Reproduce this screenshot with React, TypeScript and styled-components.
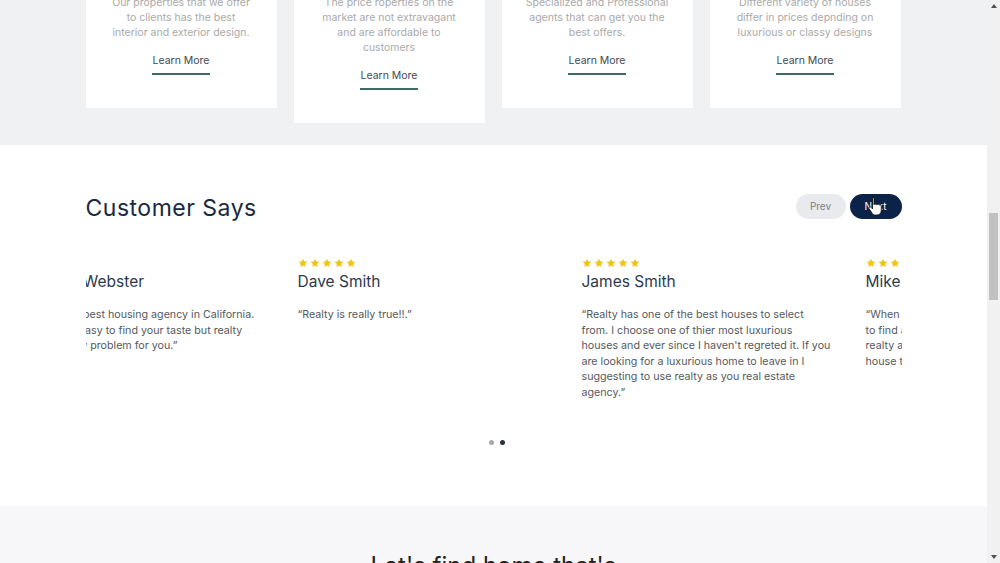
import styled, { createGlobalStyle } from "styled-components";

const GlobalStyle = createGlobalStyle`
  html, body {
    margin: 0;
    padding: 0;
    overflow: hidden;
  }
  body {
    font-family: Inter, "Open Sans", sans-serif;
    background: #ffffff;
  }
`;

const services = [
  ["Our properties that we offer", "to clients has the best", "interior and exterior design."],
  ["The price roperties on the", "market are not extravagant", "and are affordable to", "customers"],
  ["Specialized and Professional", "agents that can get you the", "best offers."],
  ["Different variety of houses", "differ in prices depnding on", "luxurious or classy designs"],
];

const reviews = [
  {
    name: "Christian Webster",
    stars: 5,
    lines: [
      "\u201CRealty is the best housing agency in California.",
      "It is not very easy to find your taste but realty",
      "resolves every problem for you.\u201D",
    ],
  },
  { name: "Dave Smith", stars: 5, lines: ["\u201CRealty is really true!!.\u201D"] },
  {
    name: "James Smith",
    stars: 5,
    lines: [
      "\u201CRealty has one of the best houses to select",
      "from. I choose one of thier most luxurious",
      "houses and ever since I haven't regreted it. If you",
      "are looking for a luxurious home to leave in I",
      "suggesting to use realty as you real estate",
      "agency.\u201D",
    ],
  },
  {
    name: "Mike Jones",
    stars: 5,
    lines: [
      "\u201CWhen I moved here I was struggling",
      "to find a home for my family until",
      "realty agents showed me a beautiful",
      "house that fit my budget.\u201D",
    ],
  },
];

const Page = styled.div`
  display: flex;
  width: 1000px;
  height: 563px;
  overflow: hidden;
`;

const Main = styled.main`
  flex: 1;
  overflow: hidden;
`;

const Services = styled.section`
  background: #f0f1f3;
  padding: 0 0 22px;
  margin-top: -5px;
`;

const Container = styled.div`
  width: 816px;
  margin: 0 auto;
`;

const CardRow = styled.div`
  display: flex;
  align-items: flex-start;
  gap: 17px;
`;

const Card = styled.div`
  width: 191px;
  background: #ffffff;
  padding: 0 8px 33px;
  box-sizing: border-box;
  display: flex;
  flex-direction: column;
  align-items: center;
`;

const CardText = styled.p`
  margin: 0;
  font-family: Inter, sans-serif;
  font-size: 10.5px;
  line-height: 15px;
  color: #a9a9a9;
  text-align: center;
`;

const LearnMore = styled.a`
  margin-top: 14px;
  font-family: Inter, sans-serif;
  font-size: 10.5px;
  color: #444a4f;
  text-decoration: none;
  padding-bottom: 5px;
  border-bottom: 2px solid #3d6a66;
  line-height: 14px;
`;

const Testimonials = styled.section`
  background: #ffffff;
  padding: 48px 0 61px;
`;

const HeadRow = styled.div`
  display: flex;
  align-items: center;
  justify-content: space-between;
  height: 26px;
`;

const Heading = styled.h2`
  margin: 3px 0 0;
  font-family: Inter, sans-serif;
  font-weight: 400;
  font-size: 23px;
  color: #1a2a40;
  letter-spacing: 0.5px;
`;

const Buttons = styled.div`
  position: relative;
  display: flex;
  gap: 4px;
`;

const NavButton = styled.button<{ $active?: boolean }>`
  width: ${(p) => (p.$active ? "52px" : "50px")};
  height: 25px;
  border: none;
  border-radius: 13px;
  font-family: Inter, sans-serif;
  font-size: 10px;
  background: ${(p) => (p.$active ? "#0c2349" : "#e9eaed")};
  color: ${(p) => (p.$active ? "#ffffff" : "#7a7f86")};
`;

const Cursor = styled.svg`
  position: absolute;
  left: 72px;
  top: 2px;
`;

const Viewport = styled.div`
  margin-top: 39px;
  overflow: hidden;
`;

const Track = styled.div<{ $shift: number }>`
  display: flex;
  transform: translateX(${(p) => -p.$shift}px);
`;

const Slide = styled.div`
  flex: 0 0 284px;
  padding-right: 24px;
  box-sizing: border-box;
`;

const Stars = styled.div`
  display: flex;
  gap: 2px;
  height: 10px;
`;

const Name = styled.h3`
  margin: 4px 0 0;
  font-family: Inter, sans-serif;
  font-weight: 400;
  font-size: 15.5px;
  line-height: 20px;
  color: #2d3a4d;
  white-space: nowrap;
`;

const Quote = styled.p`
  margin: 15px 0 0;
  font-family: Inter, sans-serif;
  font-size: 10.7px;
  line-height: 15.6px;
  color: #55595e;
  white-space: nowrap;
`;

const Dots = styled.div`
  display: flex;
  justify-content: center;
  gap: 6px;
  margin-top: 39px;
  padding-left: 6px;
`;

const Dot = styled.span<{ $on?: boolean }>`
  width: 5px;
  height: 5px;
  border-radius: 50%;
  background: ${(p) => (p.$on ? "#2a3140" : "#a8a8a8")};
`;

const Cta = styled.section`
  background: #f7f7f9;
  padding-top: 45px;
  text-align: center;
`;

const CtaTitle = styled.h2`
  margin: 0;
  font-family: Inter, sans-serif;
  font-weight: 400;
  font-size: 24px;
  color: #222;
`;

const Scrollbar = styled.div`
  width: 13px;
  background: #f1f1f1;
  display: flex;
  flex-direction: column;
  align-items: center;
`;

const Arrow = styled.div<{ $down?: boolean }>`
  width: 0;
  height: 0;
  margin: 4px 0;
  border-left: 3.5px solid transparent;
  border-right: 3.5px solid transparent;
  ${(p) =>
    p.$down
      ? "border-top: 4px solid #505050;"
      : "border-bottom: 4px solid #505050;"}
`;

const Thumb = styled.div`
  width: 9px;
  height: 87px;
  margin-top: 201px;
  background: #c1c1c1;
`;

const Spacer = styled.div`
  flex: 1;
`;

function Star() {
  return (
    <svg width="10" height="10" viewBox="0 0 24 24">
      <path
        fill="#f4c117"
        d="M12 1.5l3.1 6.9 7.4.7-5.6 5 1.7 7.4L12 17.7l-6.6 3.8 1.7-7.4-5.6-5 7.4-.7z"
      />
    </svg>
  );
}

export default function App() {
  return (
    <Page>
      <GlobalStyle />
      <Main>
        <Services>
          <Container>
            <CardRow>
              {services.map((lines, i) => (
                <Card key={i}>
                  {lines.map((l) => (
                    <CardText key={l}>{l}</CardText>
                  ))}
                  <LearnMore href="#">Learn More</LearnMore>
                </Card>
              ))}
            </CardRow>
          </Container>
        </Services>

        <Testimonials>
          <Container>
            <HeadRow>
              <Heading>Customer Says</Heading>
              <Buttons>
                <NavButton>Prev</NavButton>
                <NavButton $active>Next</NavButton>
                <Cursor width="16" height="20" viewBox="0 0 16 20">
                  <path
                    d="M4.5 1.2c.9 0 1.5.6 1.5 1.5v6.1c.2-.9 2.4-.9 2.6.1.3-.8 2.3-.8 2.5.3.4-.7 2.2-.5 2.2.7v4.6c0 2.6-1.7 4.6-4.3 4.6H7.4c-1.4 0-2.3-.6-3.1-1.6L1.2 13c-.6-.8-.4-1.7.4-2 .6-.3 1.3 0 1.8.6l1.1 1.3V2.7c0-.9.6-1.5 1.5-1.5z"
                    fill="#ffffff"
                    stroke="#111"
                    strokeWidth="0.9"
                  />
                </Cursor>
              </Buttons>
            </HeadRow>

            <Viewport>
              <Track $shift={72}>
                {reviews.map((r) => (
                  <Slide key={r.name}>
                    <Stars>
                      {Array.from({ length: r.stars }).map((_, i) => (
                        <Star key={i} />
                      ))}
                    </Stars>
                    <Name>{r.name}</Name>
                    <Quote>
                      {r.lines.map((l, i) => (
                        <span key={i}>
                          {l}
                          <br />
                        </span>
                      ))}
                    </Quote>
                  </Slide>
                ))}
              </Track>
            </Viewport>

            <Dots>
              <Dot />
              <Dot $on />
            </Dots>
          </Container>
        </Testimonials>

        <Cta>
          <CtaTitle>Let's find home that's</CtaTitle>
        </Cta>
      </Main>
      <Scrollbar>
        <Arrow />
        <Thumb />
        <Spacer />
        <Arrow $down />
      </Scrollbar>
    </Page>
  );
}
